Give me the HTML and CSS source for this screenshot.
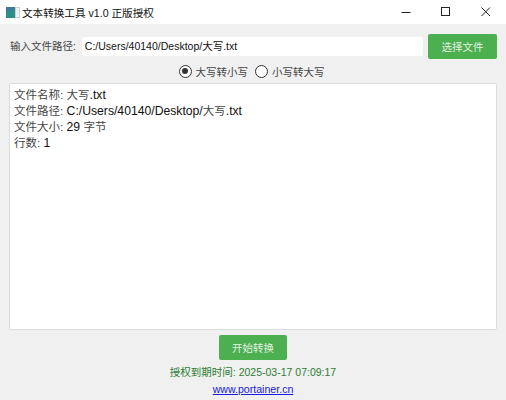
FILE: index.html
```html
<!DOCTYPE html>
<html>
<head>
  <title>文本转换工具 v1.0 正版授权</title>
  <link rel="stylesheet" href="styles.css">
</head>
<body>
<div class="titlebar">
  <svg class="app-icon" width="14" height="11" viewBox="0 0 14 11">
    <rect x="0" y="0" width="14" height="11" fill="#c9d3d6"/>
    <rect x="0" y="0" width="9" height="11" fill="#2f8f88"/>
    <rect x="0" y="0" width="9" height="4" fill="#3d7c97"/>
    <rect x="10" y="1" width="3" height="9" fill="#eef2f3"/>
  </svg>
  <span class="title">文本转换工具 v1.0 正版授权</span>
  <div class="win-buttons">
    <svg width="12" height="12" viewBox="0 0 12 12"><path d="M1.5 6.5H10.5" stroke="#222" stroke-width="1" fill="none"/></svg>
    <svg width="12" height="12" viewBox="0 0 12 12"><rect x="1.5" y="1.5" width="8" height="8" stroke="#222" stroke-width="1" fill="none"/></svg>
    <svg width="12" height="12" viewBox="0 0 12 12"><path d="M1.5 1.5L10 10M10 1.5L1.5 10" stroke="#222" stroke-width="1" fill="none"/></svg>
  </div>
</div>
<div class="main">
  <div class="file-row">
    <label class="path-label">输入文件路径:</label>
    <div class="path-input">C:/Users/40140/Desktop/大写.txt</div>
    <button class="btn btn-file">选择文件</button>
  </div>
  <div class="radio-row">
    <span class="radio-item"><span class="radio checked"></span>大写转小写</span>
    <span class="radio-item"><span class="radio"></span>小写转大写</span>
  </div>
  <div class="info-box">
    <div><span class="cn">文件名称:</span> <span class="cn">大写</span>.txt</div>
    <div><span class="cn">文件路径:</span> C:/Users/40140/Desktop/<span class="cn">大写</span>.txt</div>
    <div><span class="cn">文件大小:</span> 29 <span class="cn">字节</span></div>
    <div><span class="cn">行数:</span> 1</div>
  </div>
  <button class="btn btn-start">开始转换</button>
  <div class="expire">授权到期时间: 2025-03-17 07:09:17</div>
  <a class="site-link" href="#">www.portainer.cn</a>
</div>
</body>
</html>
```

FILE: styles.css
```css
html, body {
    margin: 0;
    padding: 0;
}

body {
    width: 506px;
    height: 400px;
    overflow: hidden;
    background-color: #f0f0f0;
    font-family: "Liberation Sans", "Noto Sans CJK SC", sans-serif;
    display: flex;
    flex-direction: column;
}

.titlebar {
    height: 24px;
    background-color: #ffffff;
    display: flex;
    align-items: center;
    padding-left: 6px;
    font-size: 10.6px;
    color: #111111;
    flex-shrink: 0;
}

.app-icon {
    margin-right: 2px;
}

.win-buttons {
    margin-left: auto;
    display: flex;
    gap: 28px;
    padding-right: 14px;
}

.main {
    flex: 1;
    display: flex;
    flex-direction: column;
    align-items: center;
    padding: 10px 9px 0;
}

.file-row {
    align-self: stretch;
    display: flex;
    align-items: center;
    height: 25px;
}

.path-label {
    width: 72px;
    font-size: 10.5px;
    color: #444444;
    padding-left: 1px;
    padding-bottom: 2px;
    white-space: nowrap;
}

.path-input {
    width: 339px;
    height: 19px;
    line-height: 19px;
    background-color: #ffffff;
    font-size: 10.5px;
    color: #111111;
    padding-left: 3px;
    border-radius: 2px;
    white-space: nowrap;
}

.btn {
    background-color: #4caf50;
    color: #e3f2e3;
    border: none;
    border-radius: 2px;
    font-family: inherit;
    font-size: 10.5px;
    padding: 0;
}

.btn-file {
    width: 69px;
    height: 25px;
    margin-left: 5px;
}

.radio-row {
    display: flex;
    gap: 7px;
    height: 24px;
    align-items: center;
    padding-right: 3px;
    font-size: 10.5px;
    color: #444444;
}

.radio-item {
    display: flex;
    align-items: center;
    gap: 4px;
}

.radio {
    width: 11px;
    height: 11px;
    border: 1px solid #333333;
    border-radius: 50%;
    background-color: #ffffff;
    display: flex;
    align-items: center;
    justify-content: center;
}

.radio.checked::after {
    content: "";
    width: 6px;
    height: 6px;
    border-radius: 50%;
    background-color: #333333;
}

.info-box {
    align-self: stretch;
    box-sizing: border-box;
    height: 247px;
    background-color: #ffffff;
    border: 1px solid #dcdcdc;
    border-radius: 2px;
    padding: 3px 4px;
    font-size: 12.2px;
    line-height: 16px;
    color: #111111;
}

.cn {
    font-size: 11.5px;
    color: #444444;
}

.btn-start {
    width: 68px;
    height: 25px;
    margin-top: 5px;
}

.expire {
    margin-top: 4px;
    height: 16px;
    line-height: 16px;
    font-size: 10.5px;
    color: #2e7d32;
}

.site-link {
    margin-top: 1px;
    font-size: 10.6px;
    line-height: 16px;
    color: #1a1ae0;
}
```
